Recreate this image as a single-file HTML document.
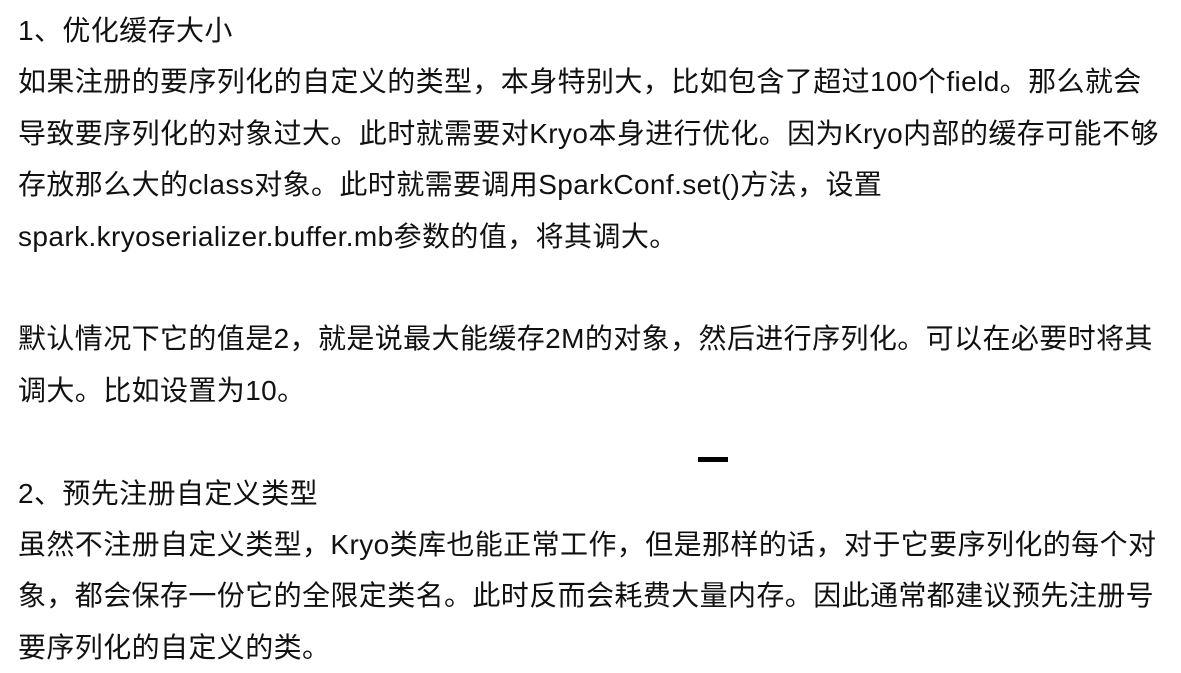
<!DOCTYPE html>
<html><head><meta charset="utf-8"><style>
html,body{margin:0;padding:0;background:#fff;width:1181px;height:667px;overflow:hidden}
.c{position:absolute;left:18px;top:5px;font-family:"Liberation Sans","Noto Sans CJK SC",sans-serif;font-size:28px;letter-spacing:0.4px;line-height:51.4px;color:#111;white-space:nowrap}
.c div{height:51.4px}
.m{position:absolute;left:698px;top:457px;width:30px;height:5px;background:#000}
</style></head><body>
<div class="c">
<div>1、优化缓存大小</div>
<div>如果注册的要序列化的自定义的类型，本身特别大，比如包含了超过100个field。那么就会</div>
<div>导致要序列化的对象过大。此时就需要对Kryo本身进行优化。因为Kryo内部的缓存可能不够</div>
<div>存放那么大的class对象。此时就需要调用SparkConf.set()方法，设置</div>
<div>spark.kryoserializer.buffer.mb参数的值，将其调大。</div>
<div></div>
<div>默认情况下它的值是2，就是说最大能缓存2M的对象，然后进行序列化。可以在必要时将其</div>
<div>调大。比如设置为10。</div>
<div></div>
<div>2、预先注册自定义类型</div>
<div>虽然不注册自定义类型，Kryo类库也能正常工作，但是那样的话，对于它要序列化的每个对</div>
<div>象，都会保存一份它的全限定类名。此时反而会耗费大量内存。因此通常都建议预先注册号</div>
<div>要序列化的自定义的类。</div>
</div>
<div class="m"></div>
</body></html>
